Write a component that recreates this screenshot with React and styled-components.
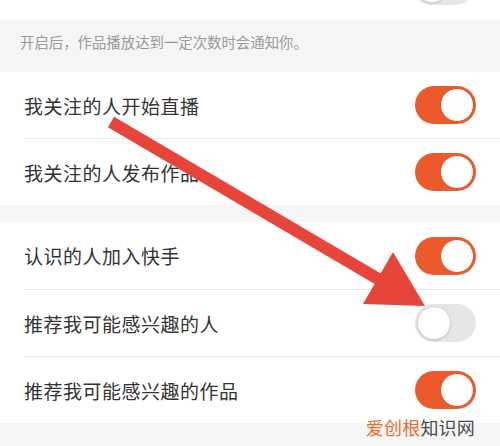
import React from "react";
import styled, { createGlobalStyle } from "styled-components";

const GlobalStyle = createGlobalStyle`
  html, body {
    margin: 0;
    padding: 0;
    background: #f5f5f5;
  }
  body {
    font-family: "Noto Sans CJK SC", "Noto Sans", sans-serif;
  }
`;

const Page = styled.div`
  position: relative;
  width: 500px;
  height: 446px;
  overflow: hidden;
  background: #f5f5f5;
`;

const TopStrip = styled.div`
  height: 20px;
  background: #fff;
  display: flex;
  justify-content: flex-end;
  align-items: flex-start;
  padding-right: 26px;
  overflow: hidden;
`;

const Hint = styled.div`
  height: 52px;
  display: flex;
  align-items: center;
  padding-left: 20px;
  padding-bottom: 10px;
  box-sizing: border-box;
  font-size: 14.4px;
  color: #9a9a9a;
`;

const Group = styled.div`
  background: #fff;
  margin-bottom: ${(p) => p.gap || 0}px;
`;

const Row = styled.div`
  height: ${(p) => p.h || 66}px;
  display: flex;
  align-items: center;
  justify-content: space-between;
  padding: 0 24px;
  box-sizing: border-box;
  border-top: ${(p) => (p.divider ? "1px solid #e9e9e9" : "none")};
  margin-left: ${(p) => (p.divider ? 24 : 0)}px;
  padding-left: ${(p) => (p.divider ? 0 : 24)}px;
`;

const Label = styled.span`
  font-size: 19px;
  color: #333;
  letter-spacing: 0.5px;
`;

const Track = styled.div`
  flex: none;
  width: 61px;
  height: 38px;
  border-radius: 19px;
  box-sizing: border-box;
  background: ${(p) => (p.on ? "#ec5a2b" : "#e6e6e6")};
  display: flex;
  justify-content: ${(p) => (p.on ? "flex-end" : "flex-start")};
  align-items: center;
  padding: 2px;
  margin-top: ${(p) => p.offset || 0}px;
`;

const Knob = styled.div`
  width: 34px;
  height: 34px;
  border-radius: 50%;
  background: #fff;
  box-sizing: border-box;
  border: 1px solid ${(p) => (p.on ? "#d9541f" : "#d4d4d4")};
  box-shadow: ${(p) => (p.on ? "none" : "0 1px 2px rgba(0,0,0,0.12)")};
`;

const Watermark = styled.div`
  position: absolute;
  right: 25px;
  bottom: 6px;
  font-size: 18px;
  color: #4a4a4a;
  letter-spacing: 0.2px;
`;

const Accent = styled.span`
  color: #e07232;
`;

const ArrowLayer = styled.svg`
  position: absolute;
  left: 0;
  top: 0;
  pointer-events: none;
`;

const Toggle = ({ on, offset }) => (
  <Track on={on ? 1 : 0} offset={offset}>
    <Knob on={on ? 1 : 0} />
  </Track>
);

const SettingRow = ({ label, on, divider, h }) => (
  <Row divider={divider ? 1 : 0} h={h}>
    <Label>{label}</Label>
    <Toggle on={on} />
  </Row>
);

const App = () => {
  return (
    <Page>
      <GlobalStyle />
      <TopStrip>
        <Toggle on={false} offset={-33} />
      </TopStrip>
      <Hint>开启后，作品播放达到一定次数时会通知你。</Hint>
      <Group gap={17}>
        <SettingRow label="我关注的人开始直播" on h={66} />
        <SettingRow label="我关注的人发布作品" on divider h={67} />
      </Group>
      <Group>
        <SettingRow label="认识的人加入快手" on h={67} />
        <SettingRow label="推荐我可能感兴趣的人" divider h={67} />
        <SettingRow label="推荐我可能感兴趣的作品" on divider h={67} />
      </Group>
      <Watermark>
        <Accent>爱创根</Accent>知识网
      </Watermark>
      <ArrowLayer width="500" height="446" viewBox="0 0 500 446">
        <line
          x1="111"
          y1="122"
          x2="385"
          y2="283"
          stroke="#e8453a"
          strokeWidth="12"
        />
        <polygon points="425,306 393,252 363,304" fill="#e8453a" />
      </ArrowLayer>
    </Page>
  );
};

export default App;
